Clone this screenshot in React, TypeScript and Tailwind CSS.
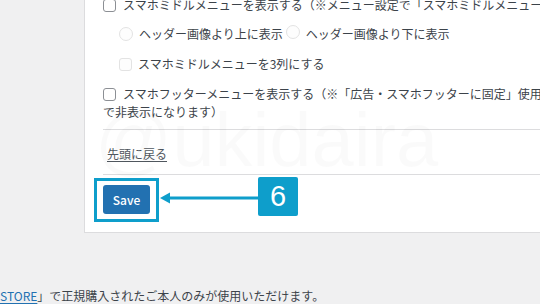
import React from "react";

const font = "font-['Noto_Sans_CJK_JP','Noto_Sans',sans-serif]";

function Box({ faded = false }: { faded?: boolean }) {
  return (
    <span
      className={`inline-block h-[13px] w-[13px] shrink-0 rounded-[3px] border align-[-2px] ${
        faded ? "border-[#e3e3e3] bg-[#fdfdfd]" : "border-[#8c8f94] bg-white"
      }`}
    />
  );
}

function Radio() {
  return <span className="inline-block h-[14px] w-[14px] shrink-0 rounded-full border border-[#e3e3e3] bg-[#fdfdfd]" />;
}

export default function App() {
  return (
    <div className={`relative h-[304px] w-[540px] overflow-hidden bg-[#f0f0f1] text-[12px] leading-[18px] text-[#3c434a] ${font}`}>
      <div className="relative -mt-[10px] ml-[84px] w-[600px] border-b border-l border-[#dcdcde] bg-white pb-[18px] pl-[18px]">
        {/* watermark */}
        <div className="pointer-events-none absolute left-[10px] top-[106px] font-['Liberation_Sans',sans-serif] text-[76px] leading-[76px] text-black/[0.02]">
          @ukidaira
        </div>

        <div className="mt-[6px] flex h-[18px] items-center gap-[7px] whitespace-nowrap">
          <Box />
          <span>スマホミドルメニューを表示する（※メニュー設定で「スマホミドルメニュー」に設定）</span>
        </div>

        <div className="ml-[16px] mt-[11px] flex h-[18px] items-center whitespace-nowrap">
          <Radio />
          <span className="ml-[6px]">ヘッダー画像より上に表示</span>
          <span className="ml-[3px]">
            <Radio />
          </span>
          <span className="ml-[6px]">ヘッダー画像より下に表示</span>
        </div>

        <div className="ml-[16px] mt-[12px] flex h-[18px] items-center gap-[6px] whitespace-nowrap">
          <Box faded />
          <span>スマホミドルメニューを3列にする</span>
        </div>

        <div className="mt-[12px] whitespace-nowrap">
          <Box />
          <span className="ml-[7px]">スマホフッターメニューを表示する（※「広告・スマホフッターに固定」使用時は自動</span>
          <br />
          <span>で非表示になります）</span>
        </div>

        <div className="mt-[8px] border-t border-[#dcdcde]" />

        <div className="mt-[15px] h-[18px] pl-[4px]">
          <a className="text-[#50575e] underline underline-offset-2">先頭に戻る</a>
        </div>

        <div className="mt-[11px] border-t border-[#dcdcde]" />

        <div className="relative mt-[10px] h-[29px]">
          <button
            type="button"
            className="h-[29px] w-[47px] rounded-[3px] bg-[#2271b1] text-[12px] font-medium leading-[29px] text-white"
          >
            Save
          </button>

          <div className="pointer-events-none absolute -left-[9px] -top-[7px] h-[44px] w-[65px] border-[3px] border-[#0e9ecb]" />

          <svg className="absolute left-[56px] top-[6px]" width="100" height="14" viewBox="0 0 100 14">
            <polygon points="1,7 11,1.5 11,12.5" fill="#0e9ecb" />
            <rect x="10" y="5.5" width="90" height="3" fill="#0e9ecb" />
          </svg>

          <div className="absolute left-[155px] -top-[8px] flex h-[39px] w-[40px] items-center justify-center rounded-[2px] bg-[#0e9ecb] font-['Liberation_Sans',sans-serif] text-[29px] leading-none text-white">
            6
          </div>
        </div>
      </div>

      <div className="mt-[54px] h-[18px] whitespace-nowrap">
        <a className="text-[#2271b1] underline underline-offset-2">STORE</a>
        <span>」で正規購入されたご本人のみが使用いただけます。</span>
      </div>
    </div>
  );
}
